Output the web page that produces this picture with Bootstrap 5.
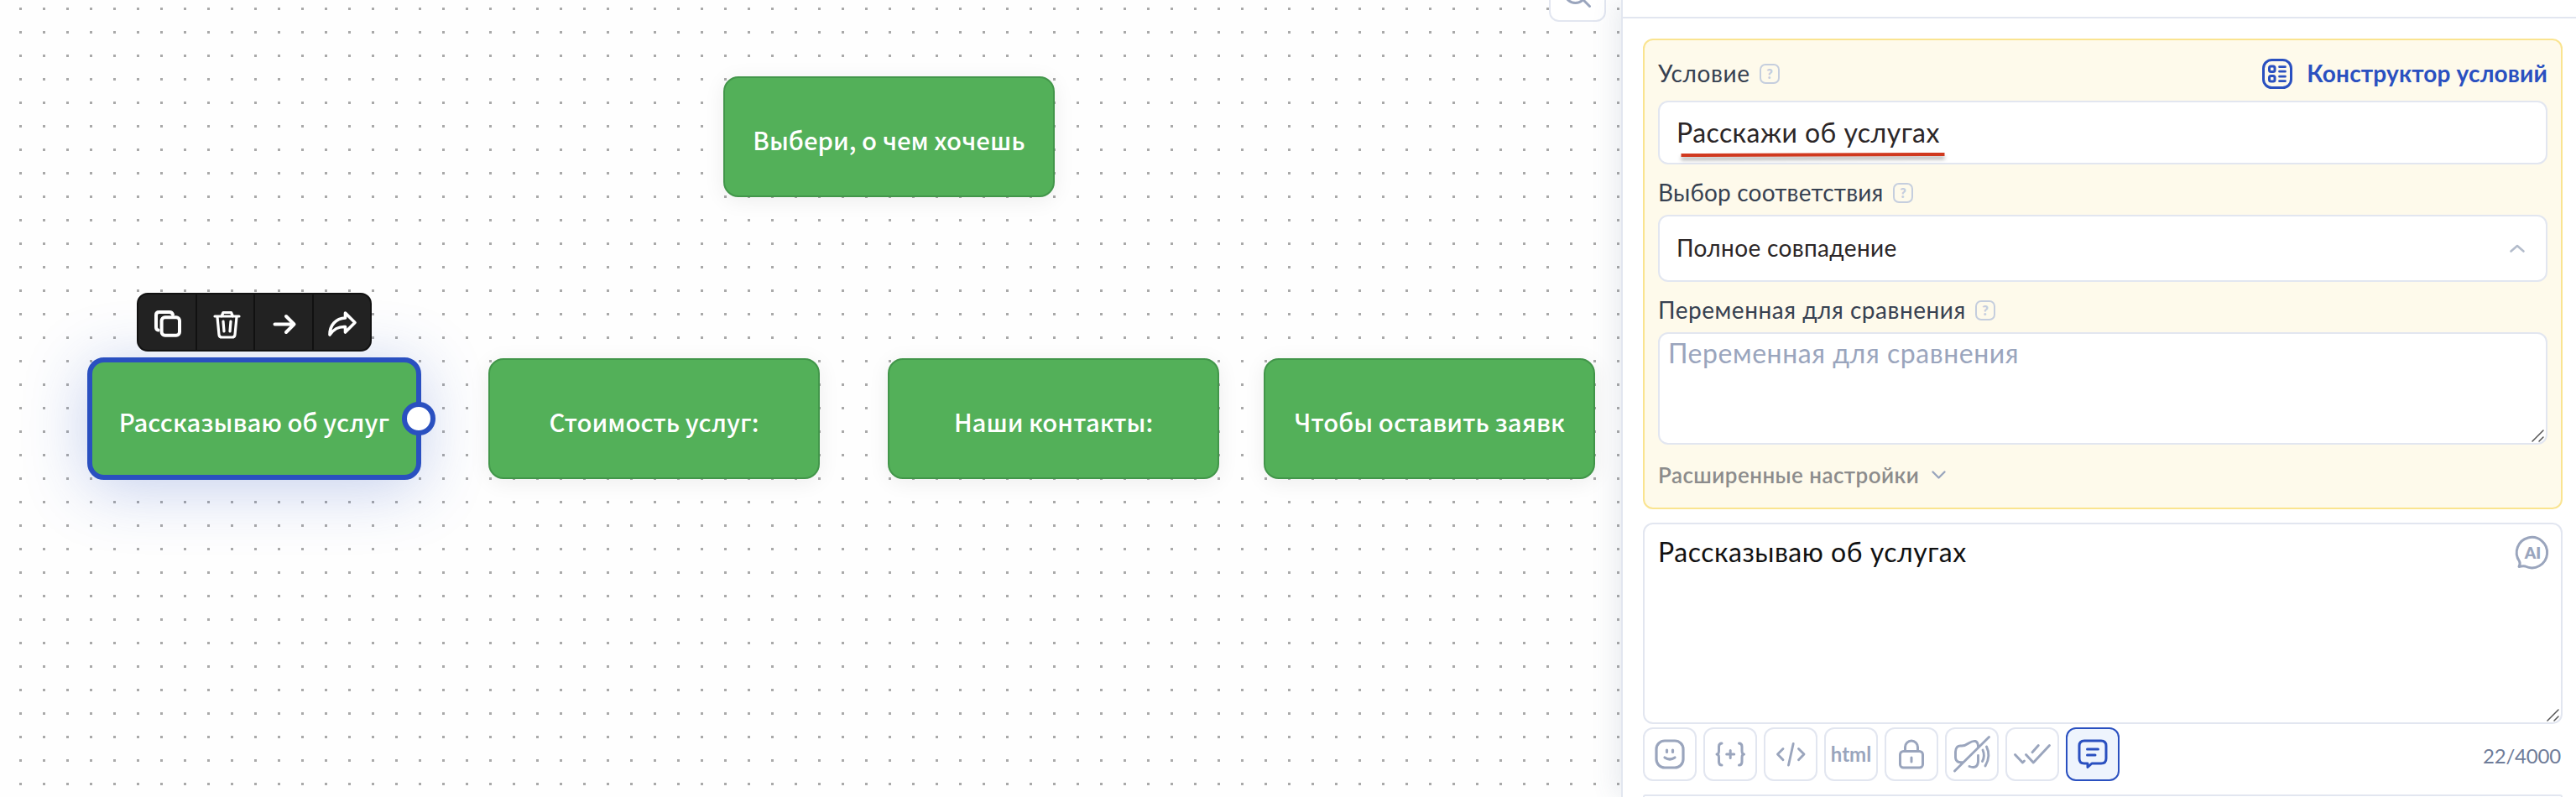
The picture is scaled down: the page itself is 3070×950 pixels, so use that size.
<!DOCTYPE html>
<html lang="ru">
<head>
    <meta charset="UTF-8">
    <meta name="viewport" content="width=device-width, initial-scale=1.0">
    <title>Конструктор воронки</title>
    <link rel="stylesheet" href="https://cdn.jsdelivr.net/npm/bootstrap@5.3.0/dist/css/bootstrap.min.css">
    <style>
        body {
            font-family: Lato, "Open Sans", sans-serif;
            font-size: 28px;
            line-height: 40px;
            color: #374151;
            height: 950px;
        }
        svg {
            display: block;
            flex: none;
            overflow: visible;
            fill: none;
            stroke: currentColor;
            stroke-linecap: round;
            stroke-linejoin: round;
        }
        svg text {
            fill: currentColor;
            stroke: none;
            font-weight: 800;
        }

        /* Flow canvas */
        .flow-canvas {
            width: 1932px;
            background: conic-gradient(from 270deg at 3px 3px, #a9a9a9 90deg, transparent 0) 23px 9px / 28px 28px #fefefe;
        }
        .flow-node {
            position: absolute;
            width: 395px;
            height: 144px;
            padding-top: 6px;
            border: 2px solid #42964a;
            border-radius: 18px;
            background: #53b059;
            box-shadow: 0 4px 26px rgba(0, 0, 0, .07);
            color: #fff;
            font-family: "Noto Sans CJK SC", "Noto Sans", sans-serif;
            font-size: 29.3px;
            font-weight: 500;
            white-space: nowrap;
        }
        .node-start { left: 862px; top: 91px; }
        .node-about { left: 104px; top: 426px; }
        .node-price { left: 582px; top: 427px; }
        .node-contacts { left: 1058px; top: 427px; }
        .node-request { left: 1506px; top: 427px; }
        .flow-node.active {
            width: 398px;
            height: 146px;
            border: 6px solid #2a50c0;
            border-radius: 20px;
            box-shadow: 0 10px 76px rgba(42, 80, 192, .27);
        }
        .node-port {
            position: absolute;
            right: -23px;
            top: 47px;
            width: 40px;
            height: 40px;
            border: 6px solid #2a50c0;
            border-radius: 50%;
            background: #fff;
        }
        .node-tools {
            left: 163px;
            top: 349px;
            width: 280px;
            height: 70px;
            border: 2px solid #111;
            border-radius: 13px;
            background: #222;
            color: #fff;
        }
        .node-tools span + span { border-left: 2px solid #111; }
        .canvas-search {
            left: 1846px;
            top: -42px;
            width: 68px;
            height: 68px;
            border: 2px solid #e2e6f0;
            border-radius: 12px;
            background: #fff;
            color: #9aa5bd;
        }

        /* Settings panel */
        .side-panel {
            border-left: 2px solid #e2e6f0;
            background: #fff;
            box-shadow: -6px 0 28px rgba(70, 100, 130, .12);
        }
        .panel-head { height: 22px; border-bottom: 2px solid #e2e6f0; }
        .panel-body { padding: 24px 16px 0 24px; }
        .condition-box {
            height: 561px;
            padding: 8px 16px 0;
            border: 2px solid #fae490;
            border-radius: 12px;
            background: #fefaeb;
        }
        .row-title { height: 64px; }
        .row-label { height: 60px; padding-top: 8px; }
        .row-title span, .row-label span, .select-box span { padding-bottom: 3px; }
        .field {
            border: 2px solid #e2e6f0;
            border-radius: 12px;
            background: #fff;
            color: #2b2627;
            font-size: 32px;
            line-height: 40px;
            resize: none;
        }
        .field::placeholder { color: #9aa5bd; opacity: 1; }
        .field-condition { height: 76px; padding: 0 20px 1px; letter-spacing: .43px; }
        .select-box { height: 80px; padding: 0 25px 0 20px; font-size: 28px; letter-spacing: .35px; }
        .field-variable { height: 134px; padding: 3px 10px; letter-spacing: .56px; }
        .field-message { height: 240px; padding: 13px 16px; letter-spacing: .52px; color: #111; }
        .help { color: #c5cede; margin-left: 11px; }
        .builder-link { color: #2a50c0; }
        .more-row { height: 72px; color: #8c8c8c; font-size: 26px; letter-spacing: .45px; }
        .grip { right: 4px; bottom: 3px; color: #555; }
        .underline { left: 27px; top: 62px; color: #d0391f; filter: drop-shadow(0 4px 2px rgba(0, 0, 0, .3)); }
        .ai-mark { right: 16px; top: 16px; color: #9aa5bd; }
        .tool {
            width: 64px;
            height: 64px;
            padding: 0;
            border: 2px solid #e2e6f0;
            border-radius: 12px;
            color: #9aa5bd;
            font-size: 24px;
            font-weight: 700;
        }
        .tool.active { border-color: #2a50c0; background: #eef4fd; color: #2a50c0; }
        .counter { color: #6f7c99; font-size: 24px; letter-spacing: -.2px; padding: 4px 2px 0 0; }
        .next-field { height: 3px; margin-top: 16px; border-bottom: 0; border-radius: 12px 12px 0 0; }
        .ls-1 { letter-spacing: .6px; }
        .ls-2 { letter-spacing: .2px; }
        .ls-3 { letter-spacing: .53px; }
        .ls-4 { letter-spacing: .15px; }
    </style>
</head>
<body class="d-flex overflow-hidden">
    <main class="flow-canvas position-relative flex-shrink-0 h-100 overflow-hidden">
        <div class="canvas-search position-absolute d-flex align-items-center justify-content-center">
            <svg width="36" height="36" stroke-width="3"><circle cx="15.5" cy="17" r="12.5"/><path d="M24.5 25.5L32.5 33.5"/></svg>
        </div>

        <div class="flow-node node-start d-flex align-items-center justify-content-center">Выбери, о чем хочешь</div>
        <div class="flow-node node-about active d-flex align-items-center justify-content-center">
            Рассказываю об услуг
            <span class="node-port"></span>
        </div>
        <div class="flow-node node-price d-flex align-items-center justify-content-center">Стоимость услуг:</div>
        <div class="flow-node node-contacts d-flex align-items-center justify-content-center">Наши контакты:</div>
        <div class="flow-node node-request d-flex align-items-center justify-content-center">Чтобы оставить заявк</div>

        <div class="node-tools position-absolute d-flex">
            <span class="flex-fill d-flex align-items-center justify-content-center">
                <svg width="36" height="36" stroke-width="4"><rect x="11.6" y="12.3" width="21.4" height="21.4" rx="4"/><path d="M7.5 27.5Q5 27 5 24V9.5Q5 6 8.5 6H21Q24 6 25 9"/></svg>
            </span>
            <span class="flex-fill d-flex align-items-center justify-content-center">
                <svg width="36" height="36" stroke-width="3.2"><path d="M6 11H35M14 11L16 6.5H25.5L27.5 11M9 12L11 33Q11.3 36 14.5 36H26.5Q29.7 36 30 33L32 12M16 17L17 29M25 17L24 29"/></svg>
            </span>
            <span class="flex-fill d-flex align-items-center justify-content-center">
                <svg width="36" height="36" stroke-width="4"><path d="M7.5 20.5H30.5M21 11L30.5 20.5L21 30"/></svg>
            </span>
            <span class="flex-fill d-flex align-items-center justify-content-center">
                <svg width="36" height="36" stroke-width="3.6"><path d="M22.5 7L34 18.5L22.5 30V23.5C14 23 9 26 4 33C4 22 11 13.5 22.5 13Z"/></svg>
            </span>
        </div>
    </main>

    <aside class="side-panel position-relative flex-fill h-100">
        <div class="panel-head"></div>
        <div class="panel-body">
            <div class="condition-box">
                <div class="row-title d-flex align-items-center">
                    <span class="ls-1">Условие</span>
                    <svg class="help" width="24" height="24" stroke-width="2"><rect x="1" y="1" width="22" height="22" rx="6"/><text x="12" y="17.5" text-anchor="middle" font-size="16">?</text></svg>
                    <a href="#" class="builder-link ms-auto d-flex align-items-center text-decoration-none fw-bold">
                        <svg class="me-3" width="36" height="36" stroke-width="3"><rect x="0.5" y="1.5" width="33" height="33" rx="10"/><rect x="7.5" y="9" width="6.500" height="6.500" rx="2"/><rect x="7.5" y="20.500" width="6.500" height="6.500" rx="2"/><path stroke-width="2.700" d="M19.5 9.700H26.5M19.5 15.200H26.5M19.5 21.200H26.5M19.5 26.700H26.5"/></svg>
                        <span class="ls-4">Конструктор условий</span>
                    </a>
                </div>
                <div class="position-relative">
                    <input class="field field-condition d-block w-100" type="text" value="Расскажи об услугах">
                    <svg class="underline position-absolute" width="315" height="6" stroke-width="4"><path stroke-linecap="butt" d="M0.5 3L314.5 2"/></svg>
                </div>

                <div class="row-label d-flex align-items-center">
                    <span class="ls-2">Выбор соответствия</span>
                    <svg class="help" width="24" height="24" stroke-width="2"><rect x="1" y="1" width="22" height="22" rx="6"/><text x="12" y="17.5" text-anchor="middle" font-size="16">?</text></svg>
                </div>
                <div class="field select-box d-flex align-items-center justify-content-between">
                    <span>Полное совпадение</span>
                    <svg width="18" height="10" stroke-width="2.6" color="#b3bccb"><path d="M1.5 8.5L9 2L16.5 8.5"/></svg>
                </div>

                <div class="row-label d-flex align-items-center">
                    <span class="ls-3">Переменная для сравнения</span>
                    <svg class="help" width="24" height="24" stroke-width="2"><rect x="1" y="1" width="22" height="22" rx="6"/><text x="12" y="17.5" text-anchor="middle" font-size="16">?</text></svg>
                </div>
                <div class="position-relative">
                    <textarea class="field field-variable d-block w-100" placeholder="Переменная для сравнения"></textarea>
                    <svg class="grip position-absolute" width="15" height="15" stroke-width="1.5"><path d="M1 14L14 1M9 14L14 9"/></svg>
                </div>

                <div class="more-row d-flex align-items-center fw-semibold">
                    <span>Расширенные настройки</span>
                    <svg class="ms-3" width="17" height="10" stroke-width="2.4" color="#9aa5bd"><path d="M0.5 1.5L7.5 8.5L14.5 1.5"/></svg>
                </div>
            </div>

            <div class="position-relative mt-3">
                <textarea class="field field-message d-block w-100">Рассказываю об услугах</textarea>
                <svg class="ai-mark position-absolute" width="40" height="40" stroke-width="3"><path d="M4.5 30A18.2 18.2 0 1 1 11.5 36Q8 35.5 4 36.5Q6 33 4.5 30Z"/><text x="20.5" y="26.5" text-anchor="middle" font-size="19">AI</text></svg>
                <svg class="grip position-absolute" width="15" height="15" stroke-width="1.5"><path d="M1 14L14 1M9 14L14 9"/></svg>
            </div>

            <div class="d-flex align-items-center gap-2 mt-1">
                <button class="tool btn d-flex align-items-center justify-content-center">
                    <svg width="36" height="36" stroke-width="3.2"><rect x="2" y="2" width="32" height="32" rx="10"/><path d="M14.5 13V15.5M21.5 13V15.5M12 22Q18 26 24 22"/></svg>
                </button>
                <button class="tool btn d-flex align-items-center justify-content-center">
                    <svg width="36" height="36" stroke-width="3"><path d="M8 5Q4.5 5 4.5 9V14Q4.5 18 2 18Q4.5 18 4.5 22V27Q4.5 31 8 31M28.5 5Q32 5 32 9V14Q32 18 34.5 18Q32 18 32 22V27Q32 31 28.5 31M13.7 18H22.7M18.2 13.5V22.5"/></svg>
                </button>
                <button class="tool btn d-flex align-items-center justify-content-center">
                    <svg width="36" height="36" stroke-width="2.9"><path d="M9 11.5L2.5 18L9 24.8M27.5 11.5L34 18L27.5 24.8M21.2 5.5L15.5 31"/></svg>
                </button>
                <button class="tool btn">html</button>
                <button class="tool btn d-flex align-items-center justify-content-center">
                    <svg width="36" height="36" stroke-width="3"><rect x="4.5" y="14.5" width="27" height="19.5" rx="4"/><path d="M10.5 14V9.5A7.5 7.5 0 0 1 25.5 9.5V14M18 22V27"/></svg>
                </button>
                <button class="tool btn d-flex align-items-center justify-content-center">
                    <svg width="36" height="36" stroke-width="2.9"><path d="M-2.5 38L38.5 -2.5M8 27.5Q-1 29 -1.5 22V15Q-1 7.5 5 8Q9 8.5 14 5Q24.5 -1.5 25.5 8V10M25.5 19.5V27Q24.5 36 15 32.5M31 13Q34 20 30.5 26.5M35.5 9Q41 20 34 32"/></svg>
                </button>
                <button class="tool btn d-flex align-items-center justify-content-center">
                    <svg width="36" height="36" stroke-width="2.9"><path d="M-2.5 18.5L6.5 28L8.5 26M18 15.7L25.3 7.5M10.5 18.5L19.3 28L38.5 7.5"/></svg>
                </button>
                <button class="tool btn active d-flex align-items-center justify-content-center">
                    <svg width="36" height="36" stroke-width="3"><path d="M8 2H28Q34 2 34 8V23Q34 29 28 29H17L12 33.5V29H8Q2 29 2 23V8Q2 2 8 2ZM11.5 12H24.5M11.5 19H21"/></svg>
                </button>
                <span class="counter ms-auto">22/4000</span>
            </div>

            <div class="field next-field"></div>
        </div>
    </aside>

    <script src="https://cdn.jsdelivr.net/npm/bootstrap@5.3.0/dist/js/bootstrap.bundle.min.js"></script>
</body>
</html>
